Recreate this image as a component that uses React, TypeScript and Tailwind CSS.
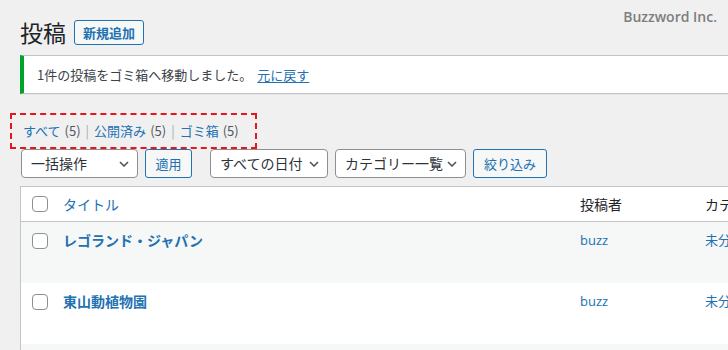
import React from 'react';

const jp = { fontFamily: '"Noto Sans CJK JP", "Noto Sans", sans-serif' };

const Chevron: React.FC = () => (
  <svg width="10" height="6" viewBox="0 0 10 6" className="shrink-0">
    <path d="M1 1l4 4 4-4" fill="none" stroke="#50575e" strokeWidth="1.6" />
  </svg>
);

const Checkbox: React.FC = () => (
  <span className="block w-[16px] h-[16px] rounded-[4px] border border-[#8c8f94] bg-white" />
);

interface SelectBoxProps {
  label: string;
  className?: string;
}

const SelectBox: React.FC<SelectBoxProps> = ({ label, className = '' }) => (
  <div
    className={`h-[29px] flex items-center justify-between gap-[4px] pl-[9px] pr-[8px] bg-white border border-[#8c8f94] rounded-[4px] text-[14px] text-[#2c3338] ${className}`}
  >
    <span className="whitespace-nowrap">{label}</span>
    <Chevron />
  </div>
);

const Button: React.FC<{ label: string; className?: string }> = ({ label, className = '' }) => (
  <div
    className={`h-[29px] flex items-center justify-center bg-[#f6f7f7] border border-[#2271b1] rounded-[3px] text-[13px] text-[#2271b1] ${className}`}
  >
    {label}
  </div>
);

const posts = [
  { title: 'レゴランド・ジャパン', author: 'buzz', category: '未分類', striped: true },
  { title: '東山動植物園', author: 'buzz', category: '未分類', striped: false },
];

const App: React.FC = () => {
  return (
    <div className="relative w-[728px] h-[350px] overflow-hidden bg-[#f0f0f1] text-[#3c434a]" style={jp}>
      {/* watermark */}
      <div
        className="absolute right-[11px] top-[6px] text-[14px] font-semibold text-[#7e7e7e]"
        style={{ fontFamily: '"Open Sans", "Noto Sans", sans-serif' }}
      >
        Buzzword Inc.
      </div>

      <div className="pl-[20px] pt-[20px]">
        {/* heading */}
        <div className="flex items-center h-[25px]">
          <h1 className="text-[23px] leading-[25px] text-[#1d2327] mr-[8px]">投稿</h1>
          <div className="h-[25px] w-[70px] flex items-center justify-center border border-[#2271b1] rounded-[3px] bg-[#f6f7f7] text-[13px] font-semibold text-[#2271b1]">
            新規追加
          </div>
        </div>

        {/* notice */}
        <div className="mt-[10px] h-[39px] flex items-center bg-white border border-[#c3c4c7] border-l-[4px] border-l-[#00a32a] border-r-0 pl-[13px] text-[13px] text-[#3c434a] shadow-[0_1px_1px_rgba(0,0,0,0.04)]">
          <span>1件の投稿をゴミ箱へ移動しました。</span>
          <span className="ml-[5px] text-[#2271b1] underline underline-offset-2">元に戻す</span>
        </div>

        {/* status links */}
        <div className="mt-[19px] ml-[-10px] w-[247px] h-[36px] flex items-center pl-[11px] border-2 border-dashed border-[#e5161d] text-[13px]">
          <span className="text-[#2271b1]">すべて</span>
          <span className="ml-[4px] text-[#50575e]">(5)</span>
          <span className="mx-[5px] text-[#a7aaad]">|</span>
          <span className="text-[#2271b1]">公開済み</span>
          <span className="ml-[4px] text-[#50575e]">(5)</span>
          <span className="mx-[5px] text-[#a7aaad]">|</span>
          <span className="text-[#2271b1]">ゴミ箱</span>
          <span className="ml-[4px] text-[#50575e]">(5)</span>
        </div>

        {/* toolbar */}
        <div className="flex items-center ml-[1px]">
          <SelectBox label="一括操作" className="w-[117px]" />
          <Button label="適用" className="w-[47px] ml-[7px]" />
          <SelectBox label="すべての日付" className="w-[118px] ml-[18px]" />
          <SelectBox label="カテゴリー一覧" className="w-[131px] ml-[7px]" />
          <Button label="絞り込み" className="w-[74px] ml-[7px]" />
        </div>

        {/* table */}
        <div className="mt-[8px] w-[760px] bg-white border border-[#c3c4c7] border-r-0">
          <div className="flex items-center h-[35px] border-b border-[#c3c4c7] text-[14px]">
            <div className="w-[42px] pl-[11px]">
              <Checkbox />
            </div>
            <div className="w-[517px] text-[#2271b1]">タイトル</div>
            <div className="w-[125px] text-[#1d2327]">投稿者</div>
            <div className="flex-1 text-[#1d2327]">カテゴリー</div>
          </div>
          {posts.map((post) => (
            <div
              key={post.title}
              className={`flex h-[61px] pt-[10px] text-[14px] ${post.striped ? 'bg-[#f6f7f7]' : 'bg-white'}`}
            >
              <div className="w-[42px] pl-[11px] pt-[1px]">
                <Checkbox />
              </div>
              <div className="w-[517px] font-bold text-[#2271b1] leading-[16px]">{post.title}</div>
              <div
                className="w-[125px] text-[13px] text-[#2271b1] leading-[16px]"
                style={{ fontFamily: '"Open Sans", "Noto Sans", sans-serif' }}
              >
                {post.author}
              </div>
              <div className="flex-1 text-[13px] text-[#2271b1] leading-[16px]">{post.category}</div>
            </div>
          ))}
          <div className="h-[20px] bg-[#f6f7f7]" />
        </div>
      </div>
    </div>
  );
};

export default App;
